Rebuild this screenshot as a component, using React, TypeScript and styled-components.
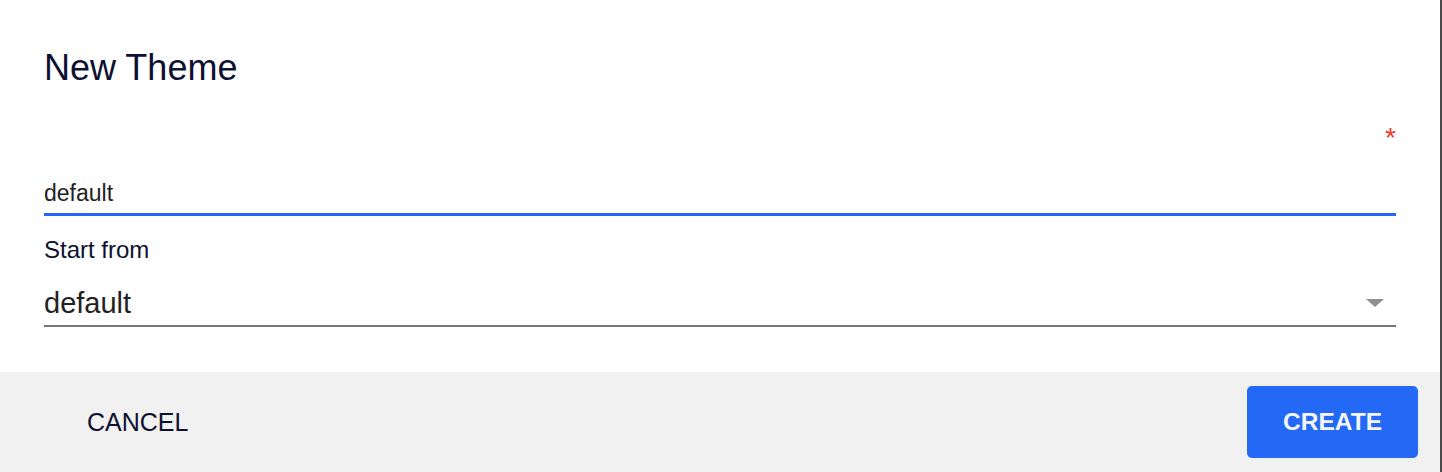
import React from "react";
import styled, { createGlobalStyle } from "styled-components";

const GlobalStyle = createGlobalStyle`
  html, body {
    margin: 0;
    padding: 0;
    background: #ffffff;
  }
  body {
    font-family: "Liberation Sans", Arial, Helvetica, sans-serif;
  }
  * { box-sizing: border-box; }
`;

const Dialog = styled.div`
  width: 1442px;
  height: 472px;
  display: flex;
  flex-direction: column;
  background: #ffffff;
  border-right: 2px solid #4b4b4b;
`;

const Body = styled.div`
  flex: 1;
  display: flex;
  flex-direction: column;
  padding: 48px 44px 0 44px;
`;

const Title = styled.h2`
  margin: 0;
  font-size: 36px;
  line-height: 40px;
  font-weight: 400;
  color: #0d1030;
`;

const RequiredRow = styled.div`
  margin-top: 36px;
  display: flex;
  justify-content: flex-end;
  height: 28px;
  font-size: 28px;
  line-height: 28px;
  color: #f0392b;
`;

const TextInput = styled.div`
  margin-top: 27px;
  height: 37px;
  font-size: 23px;
  line-height: 28px;
  color: #222222;
  border-bottom: 3px solid #2368f6;
`;

const FieldLabel = styled.div`
  margin-top: 20px;
  font-size: 24px;
  line-height: 28px;
  color: #0d1030;
`;

const SelectBox = styled.div`
  margin-top: 22px;
  height: 41px;
  display: flex;
  align-items: flex-start;
  justify-content: space-between;
  border-bottom: 2px solid #777777;
`;

const SelectValue = styled.span`
  font-size: 29px;
  line-height: 34px;
  color: #222222;
`;

const Caret = styled.svg`
  margin-top: 13px;
  margin-right: 12px;
`;

const Footer = styled.div`
  height: 100px;
  display: flex;
  align-items: center;
  justify-content: space-between;
  padding: 0 22px 0 51px;
  background: #f1f1f1;
`;

const Button = styled.button<{ $primary?: boolean }>`
  height: 72px;
  padding: 0 36px;
  border: none;
  border-radius: 5px;
  font-family: "Liberation Sans", Arial, Helvetica, sans-serif;
  font-size: ${(p) => (p.$primary ? "24.5px" : "25px")};
  font-weight: ${(p) => (p.$primary ? 700 : 400)};
  color: ${(p) => (p.$primary ? "#f4f6fb" : "#0d1030")};
  background: ${(p) => (p.$primary ? "#2369f6" : "transparent")};
  cursor: pointer;
`;

export default function App() {
  return (
    <>
      <GlobalStyle />
      <Dialog>
        <Body>
          <Title>New Theme</Title>
          <RequiredRow>*</RequiredRow>
          <TextInput>default</TextInput>
          <FieldLabel>Start from</FieldLabel>
          <SelectBox>
            <SelectValue>default</SelectValue>
            <Caret width="18" height="8" viewBox="0 0 18 8">
              <polygon points="0,0 18,0 9,8" fill="#8f8f8f" />
            </Caret>
          </SelectBox>
        </Body>
        <Footer>
          <Button>CANCEL</Button>
          <Button $primary>CREATE</Button>
        </Footer>
      </Dialog>
    </>
  );
}
